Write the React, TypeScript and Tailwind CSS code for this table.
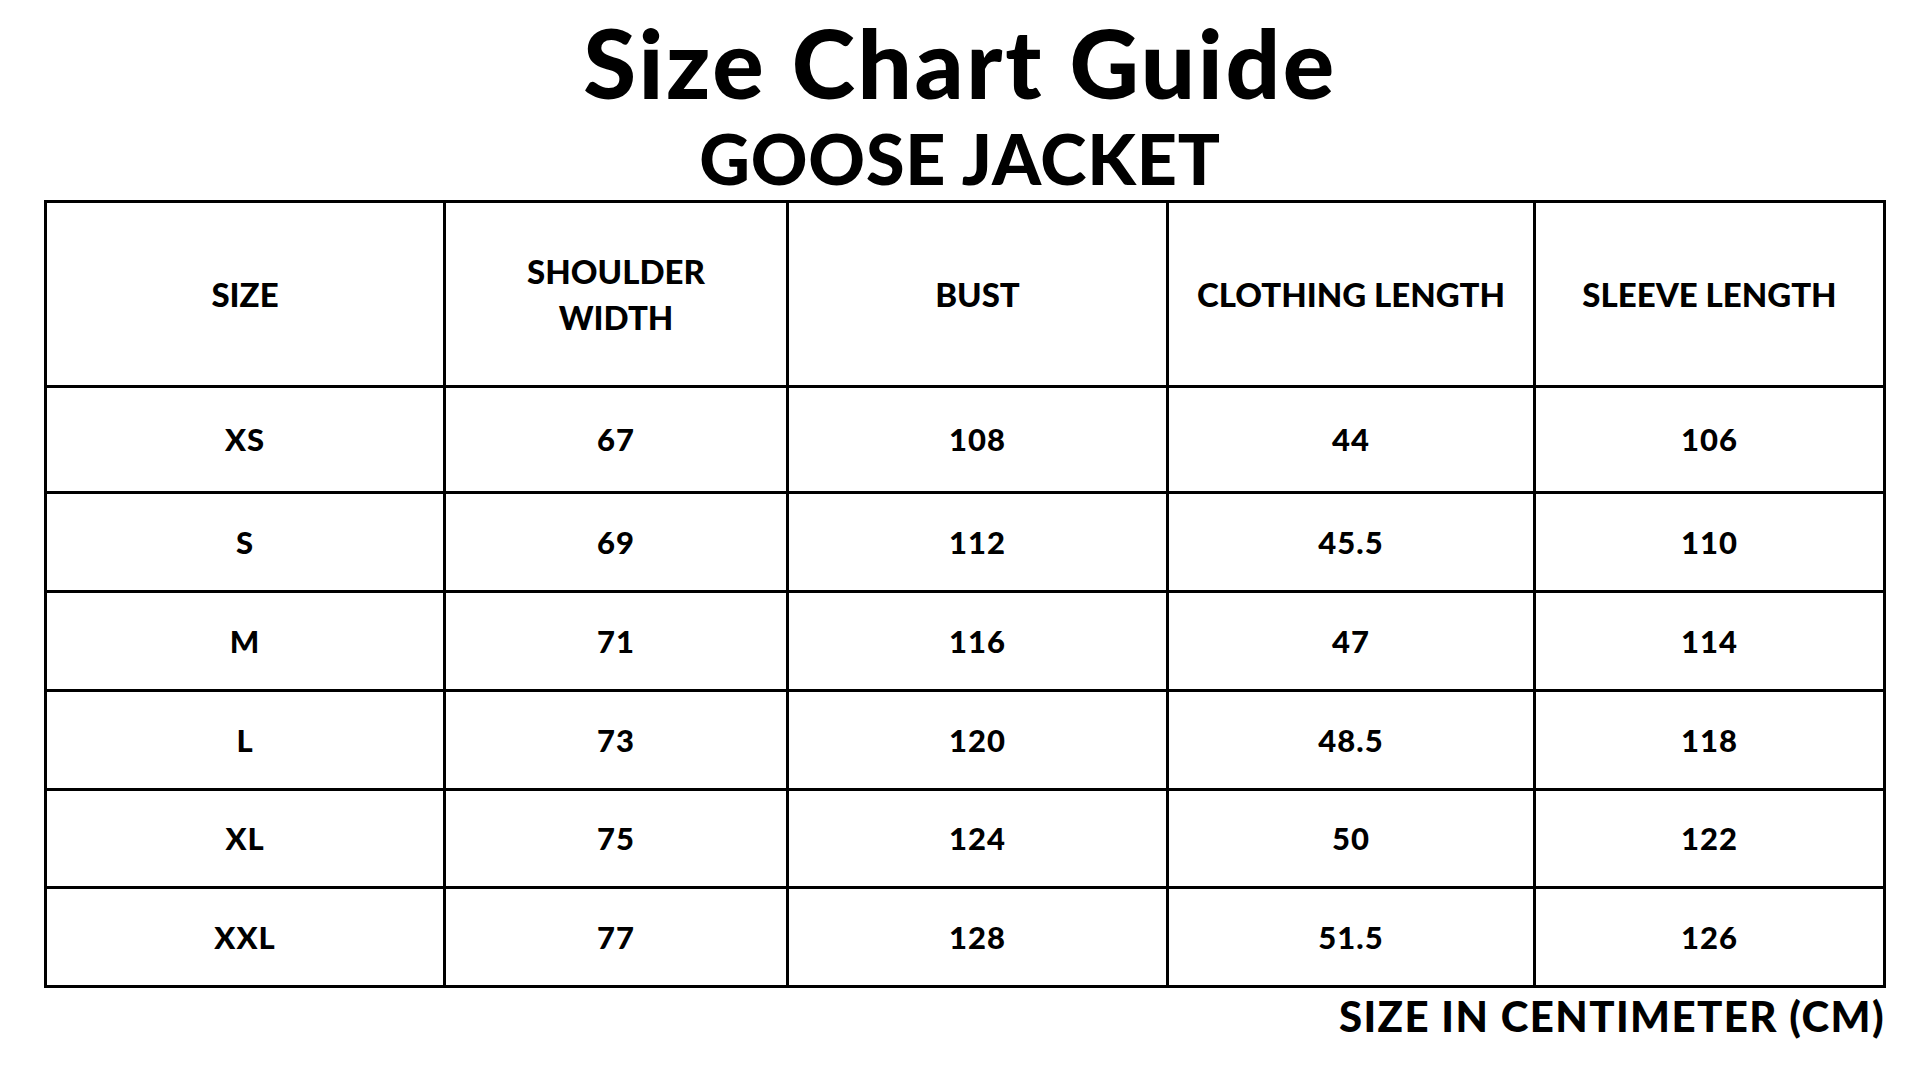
import React from "react";

const headers = [
  ["SIZE"],
  ["SHOULDER", "WIDTH"],
  ["BUST"],
  ["CLOTHING LENGTH"],
  ["SLEEVE LENGTH"],
];

const rows = [
  ["XS", "67", "108", "44", "106"],
  ["S", "69", "112", "45.5", "110"],
  ["M", "71", "116", "47", "114"],
  ["L", "73", "120", "48.5", "118"],
  ["XL", "75", "124", "50", "122"],
  ["XXL", "77", "128", "51.5", "126"],
];

const rowHeights = ["h-[106px]", "h-[99px]", "h-[99px]", "h-[99px]", "h-[98px]", "h-[99px]"];

export default function App() {
  return (
    <div
      className="w-[1920px] h-[1080px] bg-white text-black overflow-hidden"
      style={{ fontFamily: "Lato, 'Open Sans', sans-serif" }}
    >
      <div className="flex flex-col items-center pt-[14px]">
        <h1 className="text-[96px] leading-none font-black tracking-[2.6px]">Size Chart Guide</h1>
        <h2 className="mt-[13px] text-[70px] leading-none font-black tracking-[0.8px]">GOOSE JACKET</h2>
      </div>
      <div className="px-[44px] mt-[7px]">
        <table className="w-[1839px] border-collapse border-[3px] border-black table-fixed">
          <colgroup>
            <col className="w-[399px]" />
            <col className="w-[343px]" />
            <col className="w-[380px]" />
            <col className="w-[367px]" />
            <col className="w-[350px]" />
          </colgroup>
          <thead>
            <tr className="h-[185px]">
              {headers.map((h, i) => (
                <th
                  key={i}
                  className="border-[3px] border-black text-center align-middle font-black text-[33px] leading-[46px] p-0"
                >
                  {h.map((line, j) => (
                    <div key={j}>{line}</div>
                  ))}
                </th>
              ))}
            </tr>
          </thead>
          <tbody>
            {rows.map((r, i) => (
              <tr key={i} className={rowHeights[i]}>
                {r.map((c, j) => (
                  <td
                    key={j}
                    className="border-[3px] border-black text-center align-middle font-black text-[31px] tracking-[1px] leading-none p-0"
                  >
                    {c}
                  </td>
                ))}
              </tr>
            ))}
          </tbody>
        </table>
        <div className="flex justify-end mt-[7px] mr-[-9px]">
          <p className="text-[42px] leading-none font-black tracking-[1.4px]">SIZE IN CENTIMETER (CM)</p>
        </div>
      </div>
    </div>
  );
}
